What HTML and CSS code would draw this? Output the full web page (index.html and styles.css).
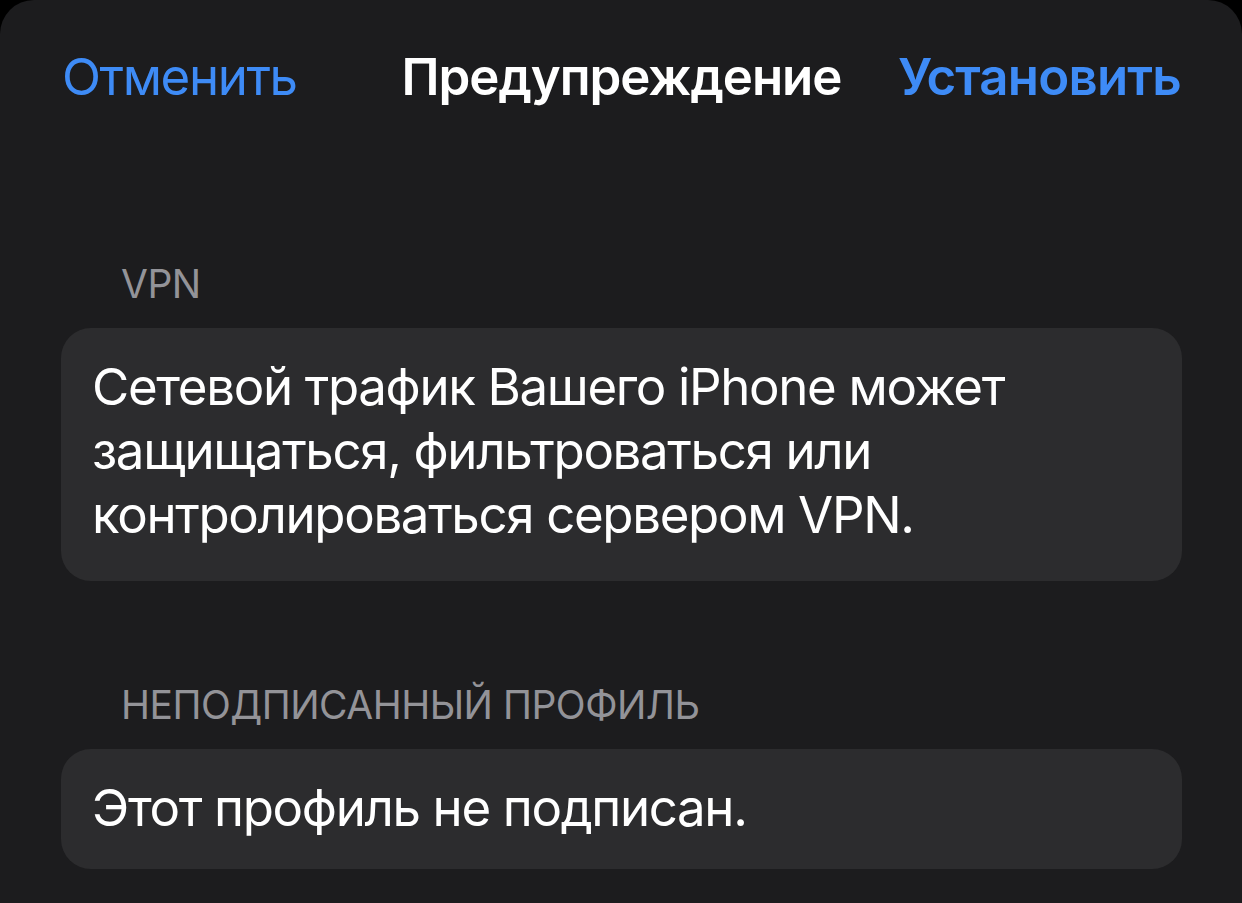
FILE: index.html
```html
<!DOCTYPE html>
<html lang="ru">
<head>
<meta charset="utf-8">
<title>Предупреждение</title>
<link rel="stylesheet" href="styles.css">
</head>
<body>
<div class="sheet">
  <header class="nav">
    <span class="nav-btn nav-cancel">Отменить</span>
    <span class="nav-title">Предупреждение</span>
    <span class="nav-btn nav-install">Установить</span>
  </header>
  <section class="group group-first">
    <div class="group-header">VPN</div>
    <div class="card">Сетевой трафик Вашего iPhone может защищаться, фильтроваться или контролироваться сервером VPN.</div>
  </section>
  <section class="group">
    <div class="group-header">НЕПОДПИСАННЫЙ ПРОФИЛЬ</div>
    <div class="card card-single">Этот профиль не подписан.</div>
  </section>
</div>
</body>
</html>
```

FILE: styles.css
```css
html, body {
  margin: 0;
  padding: 0;
  background: #000;
}
body {
  width: 1242px;
  height: 903px;
  overflow: hidden;
  font-family: Inter, "Noto Sans", sans-serif;
  color: #fff;
}
.sheet {
  background: #1c1c1e;
  height: 903px;
  border-radius: 34px 34px 0 0;
  box-sizing: border-box;
  padding-top: 46px;
}
.nav {
  display: grid;
  grid-template-columns: 1fr auto 1fr;
  align-items: baseline;
  padding: 0 61px 0 62px;
  font-size: 51px;
  line-height: 61px;
}
.nav-btn {
  color: #3e8bf6;
}
.nav-cancel {
  justify-self: start;
  font-weight: 400;
  letter-spacing: -1.4px;
}
.nav-title {
  font-weight: 600;
  color: #fff;
  letter-spacing: -1.05px;
}
.nav-install {
  justify-self: end;
  font-weight: 600;
  letter-spacing: -0.8px;
}
.group {
  padding: 0 60px 0 61px;
}
.group-first {
  margin-top: 153px;
}
.group + .group {
  margin-top: 100px;
}
.group-header {
  font-size: 39px;
  line-height: 47px;
  color: #939398;
  padding-left: 60px;
  margin-bottom: 21px;
  letter-spacing: -0.5px;
}
.card {
  background: #2c2c2e;
  border-radius: 30px;
  padding: 27px 30px 34px 31px;
  font-size: 51px;
  line-height: 64px;
  letter-spacing: -1.35px;
}
.card-single {
  padding-bottom: 29px;
}
```
